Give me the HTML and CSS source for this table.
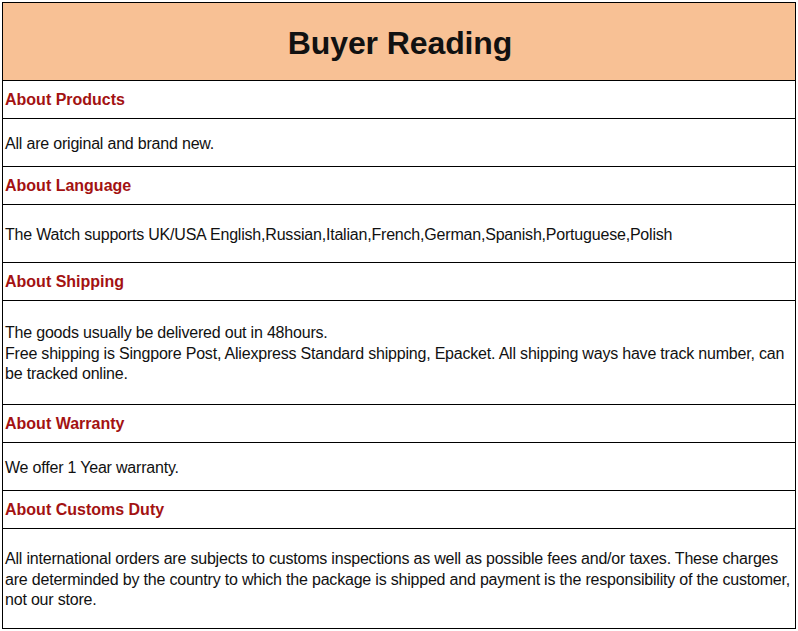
FILE: index.html
```html
<!DOCTYPE html>
<html>
<head>
<meta charset="utf-8">
<link rel="stylesheet" href="styles.css">
</head>
<body>
<div class="sheet">
  <div class="title">Buyer Reading</div>
  <div class="row head">About Products</div>
  <div class="row text h48">All are original and brand new.</div>
  <div class="row head">About Language</div>
  <div class="row text h58">The Watch supports UK/USA English,Russian,Italian,French,German,Spanish,Portuguese,Polish</div>
  <div class="row head">About Shipping</div>
  <div class="row text h104"><div>The goods usually be delivered out in 48hours.<br>Free shipping is Singpore Post, Aliexpress Standard shipping, Epacket. All shipping ways have track number, can be tracked online.</div></div>
  <div class="row head">About Warranty</div>
  <div class="row text h48">We offer 1 Year warranty.</div>
  <div class="row head">About Customs Duty</div>
  <div class="row text h100 last"><div>All international orders are subjects to customs inspections as well as possible fees and/or taxes. These charges are determinded by the country to which the package is shipped and payment is the responsibility of the customer, not our store.</div></div>
</div>
</body>
</html>
```

FILE: styles.css
```css
html, body {
  margin: 0;
  padding: 0;
  background: #ffffff;
}
body {
  font-family: "Liberation Sans", Arial, sans-serif;
}
.sheet {
  box-sizing: border-box;
  margin: 2px 0 0 2px;
  width: 794px;
  border: 1px solid #000;
  display: flex;
  flex-direction: column;
}
.title {
  box-sizing: border-box;
  height: 78px;
  background: #f8c195;
  border-bottom: 1px solid #000;
  display: flex;
  align-items: center;
  justify-content: center;
  font-size: 32px;
  font-weight: bold;
  color: #111;
  padding-top: 3px;
  padding-left: 2px;
  letter-spacing: -0.1px;
}
.row {
  box-sizing: border-box;
  border-bottom: 1px solid #000;
  display: flex;
  align-items: center;
  padding: 0 4px 0 2px;
}
.row.last {
  border-bottom: none;
  height: 99px;
}
.head {
  height: 38px;
  font-size: 16px;
  font-weight: bold;
  color: #a31212;
}
.text {
  font-size: 16px;
  color: #111;
  line-height: 20.5px;
  letter-spacing: -0.2px;
  padding-top: 3px;
}
.h48 { height: 48px; }
.h58 { height: 58px; }
.h104 { height: 104px; }
```
